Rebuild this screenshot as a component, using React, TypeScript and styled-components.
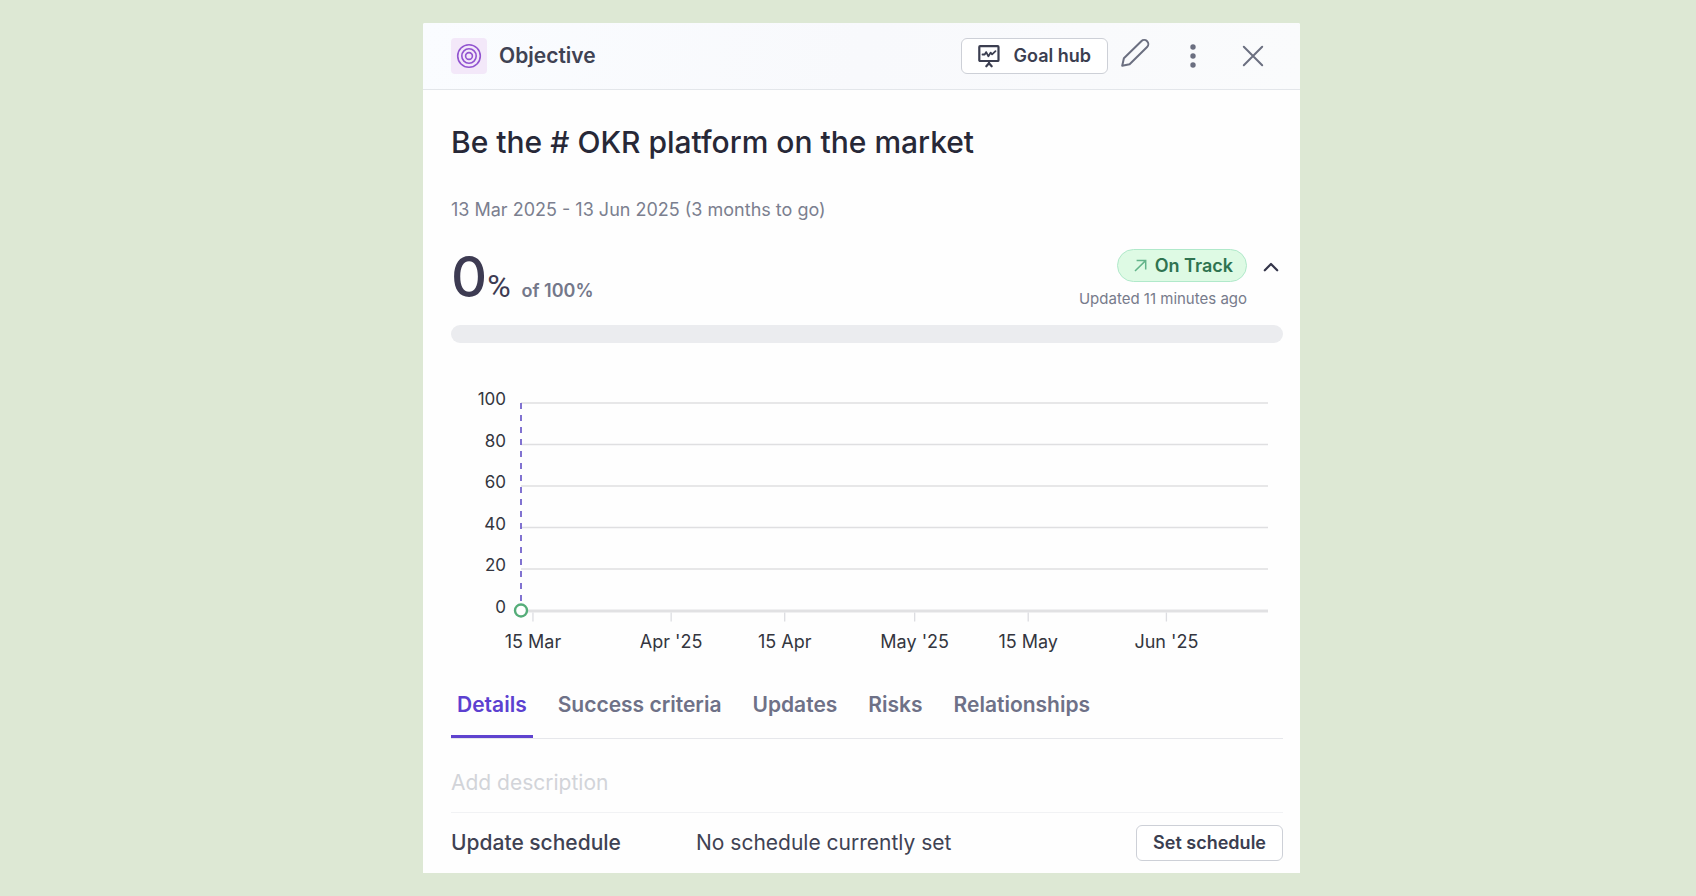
import React, { useState } from "react";
import styled, { createGlobalStyle } from "styled-components";

const GlobalStyle = createGlobalStyle`
  *, *::before, *::after { box-sizing: border-box; }
  body {
    margin: 0;
    background: #dde8d4;
    color: #3f4253;
    font-family: Inter, "Liberation Sans", sans-serif;
    font-size: 21px;
    line-height: 28px;
  }
  h1, h2, p { margin: 0; font-weight: inherit; font-size: inherit; }
  button, input { font: inherit; color: inherit; }
`;

const Page = styled.main`
  display: grid;
  grid-template-columns: 423fr 877fr 396fr;
  min-height: 100vh;
  padding: 23px 0;
  align-items: start;
`;

const Panel = styled.article`
  grid-column: 2;
  background: #fefefe;
  border-radius: 2px 2px 0 0;
`;

const Header = styled.header`
  display: flex;
  align-items: center;
  height: 67px;
  padding: 0 29px 0 28px;
  border-bottom: 1px solid #e3e6ea;
  border-radius: 2px 2px 0 0;
  background: linear-gradient(100deg, #fafcff, #f8f9fc 50%, #fafbfc);
`;

const GoalMark = styled.span`
  display: grid;
  place-items: center;
  width: 36px;
  height: 36px;
  margin-right: 12px;
  border-radius: 4px;
  background: #f3e8f9;
`;

const Kind = styled.h2`
  flex: 1;
  font-weight: 600;
`;

const OutlineButton = styled.button`
  display: flex;
  align-items: center;
  gap: 14px;
  height: 36px;
  padding: 0 16px;
  border: 1px solid #cdd0d7;
  border-radius: 6px;
  background: #fff;
  color: #3b3e50;
  font-size: 18px;
  font-weight: 600;
  line-height: 24px;
`;

const IconActions = styled.div`
  display: flex;
  gap: 24px;
  margin-left: 7px;
`;

const IconButton = styled.button`
  display: grid;
  place-items: center;
  width: 36px;
  height: 36px;
  padding: 0;
  border: 0;
  background: none;
  color: #6b6f80;
`;

const Content = styled.div`
  padding: 34px 17px 0 28px;
`;

const Title = styled.h1`
  font-size: 30px;
  font-weight: 500;
  line-height: 36px;
  color: #272837;
`;

const Dates = styled.p`
  margin-top: 38px;
  font-size: 18px;
  line-height: 24px;
  color: #7b7f8f;
`;

const Summary = styled.section`
  display: flex;
  justify-content: space-between;
  height: 76px;
  margin-top: 27px;
`;

const Score = styled.p`
  display: flex;
  align-items: baseline;
  font-size: 56px;
  font-weight: 500;
  line-height: 56px;
  color: #3d3b52;
`;

const Percent = styled.span`
  font-family: Roboto, Inter, sans-serif;
  font-size: 32px;
  font-weight: 400;
  line-height: 28px;
`;

const Target = styled.span`
  margin-left: 11px;
  font-size: 18px;
  line-height: 24px;
  font-weight: 600;
  color: #74788a;
`;

const StatusArea = styled.div`
  display: flex;
  align-items: flex-start;
  gap: 12px;
`;

const Status = styled.div`
  display: flex;
  flex-direction: column;
  align-items: flex-end;
  gap: 7px;
`;

const Pill = styled.span`
  display: flex;
  align-items: center;
  gap: 8px;
  height: 33px;
  padding: 0 13px 0 16px;
  border: 1px solid #b0e9ca;
  border-radius: 17px;
  background: #defae4;
  color: #2f7350;
  font-size: 18px;
  font-weight: 600;
  line-height: 24px;
`;

const Updated = styled.p`
  font-size: 15px;
  line-height: 20px;
  color: #777b8b;
`;

const CollapseButton = styled(IconButton)`
  width: 24px;
  color: #34354a;
`;

const Track = styled.div`
  height: 18px;
  border-radius: 9px;
  background: #ebecef;
  overflow: hidden;
`;

const Fill = styled.div`
  height: 100%;
  background: #4ea875;
`;

const ChartBox = styled.figure`
  margin: 60px 15px 0 70px;
`;

const Plot = styled.svg`
  display: block;
  width: 100%;
  height: 252px;
  overflow: visible;
`;

const AxisLabel = styled.text<{ $size: number }>`
  fill: #34363f;
  font-size: ${(p) => p.$size}px;
`;

const Tabs = styled.div`
  display: flex;
  gap: 19px;
  height: 56px;
  margin-top: 28px;
  border-bottom: 1px solid #e6e7eb;
`;

const Tab = styled.button<{ $active: boolean }>`
  height: 55px;
  padding: 0 6px 8px;
  border: 0;
  border-bottom: 3px solid ${(p) => (p.$active ? "#5f43cf" : "transparent")};
  background: none;
  color: ${(p) => (p.$active ? "#5c40d0" : "#6e7187")};
  font-weight: 600;
`;

const Description = styled.input`
  display: block;
  width: 100%;
  height: 74px;
  padding: 13px 0 0;
  border: 0;
  border-bottom: 1px solid #f1f2f4;
  background: none;
  outline: none;
  &::placeholder { color: #d2d4d9; opacity: 1; }
`;

const ScheduleRow = styled.section`
  display: grid;
  grid-template-columns: 245fr 440fr auto;
  align-items: center;
  padding: 12px 0;
`;

const ScheduleLabel = styled.h2`
  font-weight: 500;
`;

const CELL = 83 / 2;
const Y_VALUES = [100, 80, 60, 40, 20];
const X_TICKS = [
  { at: 1.6, label: "15 Mar" },
  { at: 20.1, label: "Apr '25" },
  { at: 35.3, label: "15 Apr" },
  { at: 52.7, label: "May '25" },
  { at: 67.9, label: "15 May" },
  { at: 86.4, label: "Jun '25" },
];
const TABS = ["Details", "Success criteria", "Updates", "Risks", "Relationships"];

function TargetIcon() {
  return (
    <svg width="26" height="26" viewBox="0 0 26 26" fill="none" stroke="#9254d0" strokeWidth="1.6" aria-hidden="true">
      <circle cx="13" cy="13" r="11.3" />
      <circle cx="13" cy="13" r="7.2" />
      <circle cx="13" cy="13" r="3.4" />
    </svg>
  );
}

function BoardIcon() {
  return (
    <svg width="22" height="24" viewBox="0 0 22 24" fill="none" stroke="currentColor" strokeWidth="2.2" strokeLinecap="round" strokeLinejoin="round" aria-hidden="true">
      <rect x="1.3" y="2.2" width="19.2" height="14.8" rx="0.8" />
      <path d="M4.5 10.5h2.2l1.5-2.4 2.2 4.2 2.2-3.7 1.5 1.7 3.4-3.2" strokeWidth="1.8" />
      <path d="M11 17v2.3M8.3 22.3l2.7-3 2.7 3" />
    </svg>
  );
}

function PencilIcon() {
  return (
    <svg width="36" height="36" viewBox="-1 0 36 36" fill="none" stroke="currentColor" strokeWidth="2" strokeLinejoin="round" aria-hidden="true">
      <path d="M6.2 27.8L7.9 20.3 25.3 3.2a4.1 4.1 0 0 1 5.8 5.8L13.6 26.2z" />
    </svg>
  );
}

function Chart() {
  const base = Y_VALUES.length * CELL + 1;
  return (
    <ChartBox>
      <Plot role="img" aria-label="Progress over time">
        {Y_VALUES.map((value, i) => (
          <g key={value}>
            <line x1="0" x2="100%" y1={i * CELL} y2={i * CELL} stroke="#dfdfe1" strokeWidth="1.5" />
            <AxisLabel $size={17} x="-15" y={i * CELL + 2} textAnchor="end">{value}</AxisLabel>
          </g>
        ))}
        <AxisLabel $size={17} x="-15" y={base + 1} textAnchor="end">0</AxisLabel>
        <line x1="0" x2="100%" y1={base - 0.5} y2={base - 0.5} stroke="#e1e1e3" strokeWidth="3" />
        {X_TICKS.map((tick) => (
          <g key={tick.label}>
            <line x1={`${tick.at}%`} x2={`${tick.at}%`} y1={base + 1} y2={base + 10} stroke="#dcdde1" strokeWidth="1.3" />
            <AxisLabel $size={18} x={`${tick.at}%`} y={base + 36} textAnchor="middle">{tick.label}</AxisLabel>
          </g>
        ))}
        <line x1="0" x2="0" y1="0" y2={base - 7} stroke="#7464cc" strokeWidth="1.8" strokeDasharray="6 6" />
        <circle cx="0" cy={base - 1} r="6" fill="#fff" stroke="#55ad79" strokeWidth="2.4" />
      </Plot>
    </ChartBox>
  );
}

export default function App() {
  const [active, setActive] = useState("Details");
  const progress = 0;
  return (
    <>
      <GlobalStyle />
      <Page>
        <Panel>
          <Header>
            <GoalMark><TargetIcon /></GoalMark>
            <Kind>Objective</Kind>
            <OutlineButton type="button"><BoardIcon />Goal hub</OutlineButton>
            <IconActions>
              <IconButton type="button" aria-label="Edit"><PencilIcon /></IconButton>
              <IconButton type="button" aria-label="More options">
                <svg width="8" height="26" viewBox="0 0 8 26" fill="currentColor" aria-hidden="true">
                  <circle cx="4" cy="4" r="2.7" />
                  <circle cx="4" cy="13" r="2.7" />
                  <circle cx="4" cy="22" r="2.7" />
                </svg>
              </IconButton>
              <IconButton type="button" aria-label="Close">
                <svg width="22" height="22" viewBox="0 0 22 22" stroke="currentColor" strokeWidth="2" strokeLinecap="round" aria-hidden="true">
                  <path d="M1.8 1.8l18.4 18.4M20.2 1.8L1.8 20.2" />
                </svg>
              </IconButton>
            </IconActions>
          </Header>
          <Content>
            <Title>Be the # OKR platform on the market</Title>
            <Dates>13 Mar 2025 - 13 Jun 2025 (3 months to go)</Dates>
            <Summary>
              <Score>{progress}<Percent>%</Percent><Target>of 100%</Target></Score>
              <StatusArea>
                <Status>
                  <Pill>
                    <svg width="13" height="13" viewBox="0 0 13 13" fill="none" stroke="#63b48a" strokeWidth="1.5" aria-hidden="true">
                      <path d="M1 12L11.6 1.6M2.6 1.5h9.1v9.1" />
                    </svg>
                    On Track
                  </Pill>
                  <Updated>Updated 11 minutes ago</Updated>
                </Status>
                <CollapseButton type="button" aria-label="Collapse progress">
                  <svg width="16" height="10" viewBox="0 0 16 10" fill="none" stroke="currentColor" strokeWidth="2.2" strokeLinecap="round" strokeLinejoin="round" aria-hidden="true">
                    <path d="M1.8 8.3L8 2l6.2 6.3" />
                  </svg>
                </CollapseButton>
              </StatusArea>
            </Summary>
            <Track role="progressbar" aria-label="Progress" aria-valuenow={progress} aria-valuemin={0} aria-valuemax={100}>
              <Fill style={{ width: `${progress}%` }} />
            </Track>
            <Chart />
            <Tabs role="tablist">
              {TABS.map((tab) => (
                <Tab key={tab} type="button" role="tab" aria-selected={tab === active} $active={tab === active} onClick={() => setActive(tab)}>
                  {tab}
                </Tab>
              ))}
            </Tabs>
            <Description type="text" aria-label="Description" placeholder="Add description" />
            <ScheduleRow>
              <ScheduleLabel>Update schedule</ScheduleLabel>
              <p>No schedule currently set</p>
              <OutlineButton type="button">Set schedule</OutlineButton>
            </ScheduleRow>
          </Content>
        </Panel>
      </Page>
    </>
  );
}
